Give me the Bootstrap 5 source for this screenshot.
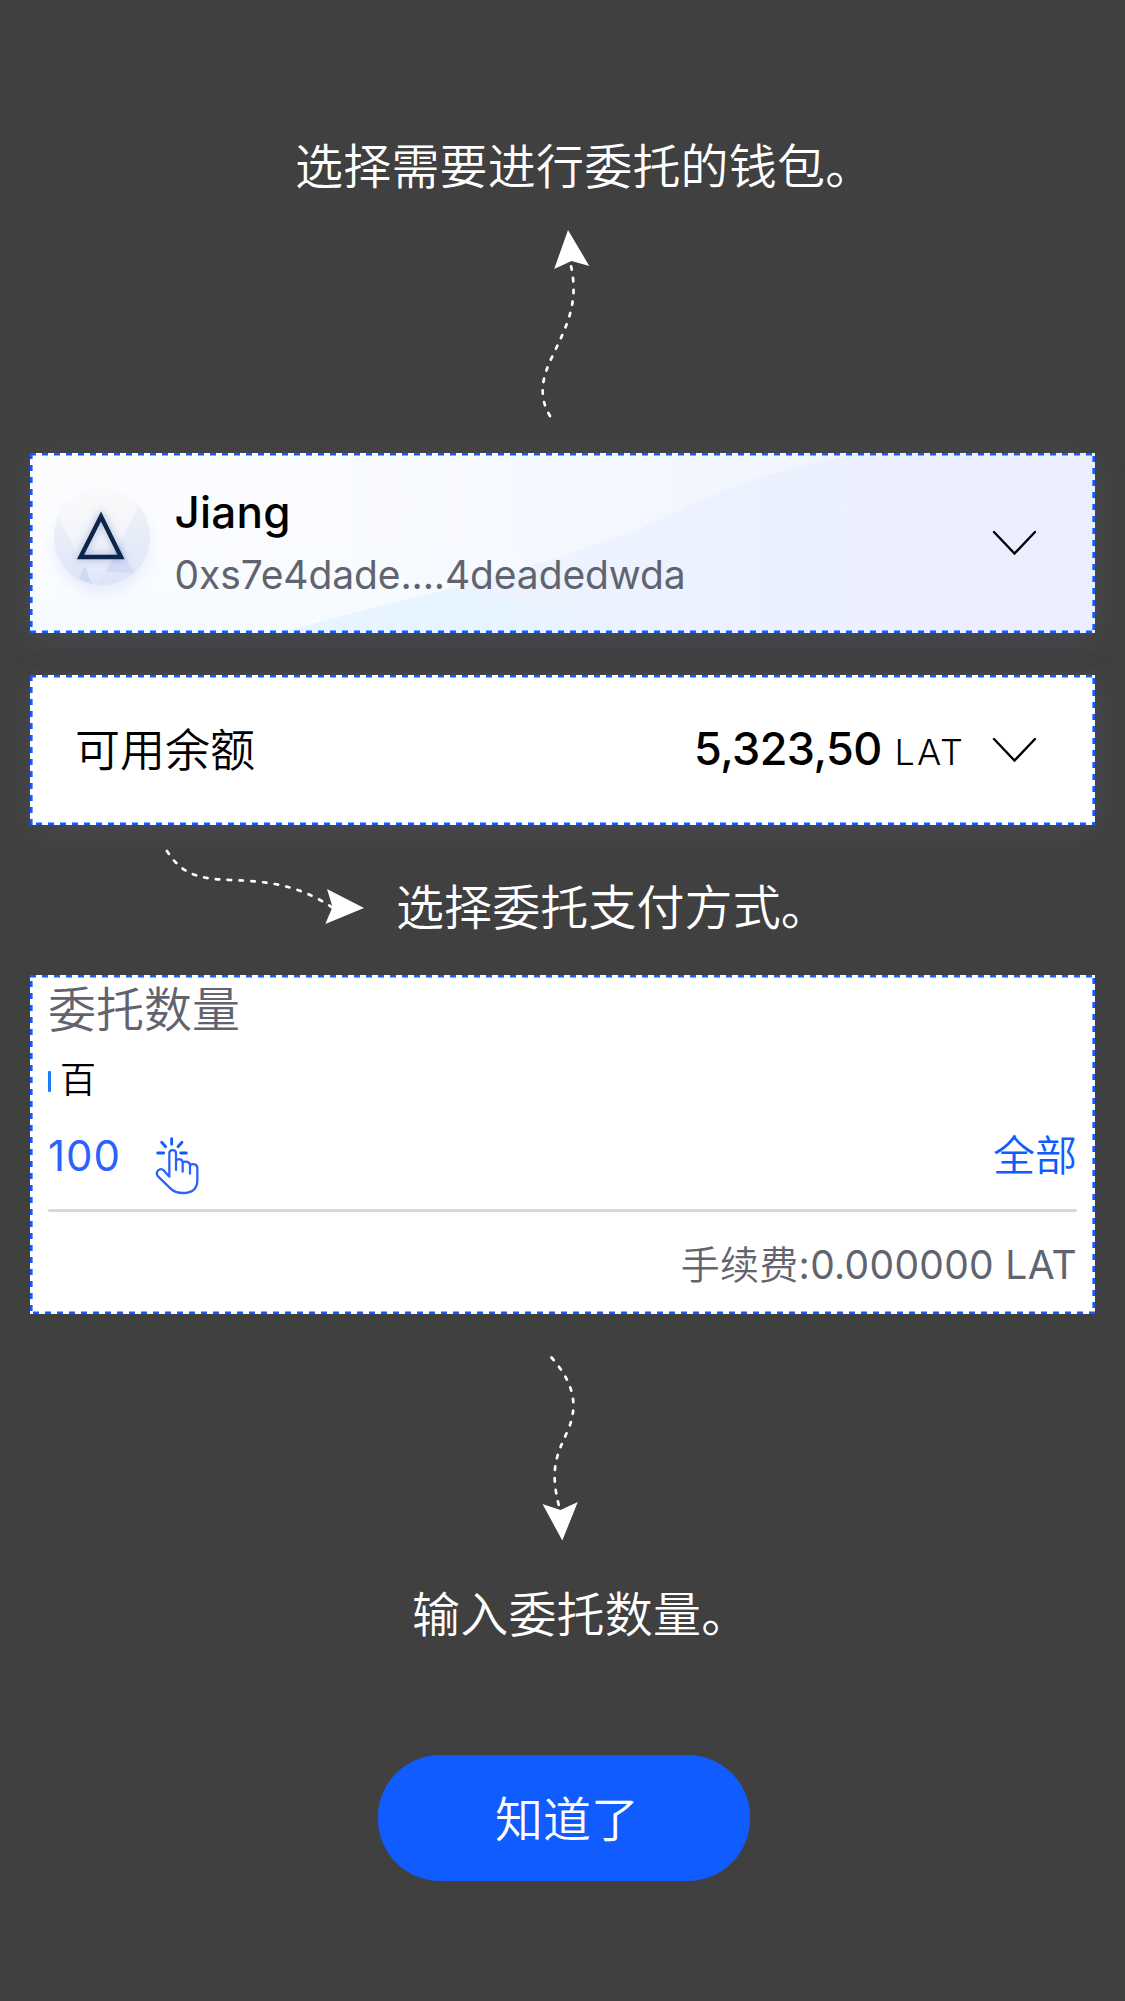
<!DOCTYPE html>
<html lang="zh-CN">
<head>
<meta charset="utf-8">
<meta name="viewport" content="width=device-width, initial-scale=1">
<title>委托引导</title>
<link href="https://cdn.jsdelivr.net/npm/bootstrap@5.3.0/dist/css/bootstrap.min.css" rel="stylesheet">
<style>
body{background:#404040;font-family:"Inter","Noto Sans CJK SC",sans-serif;color:#000;min-height:2001px}
.guide{width:1125px}
.zh{font-family:"Noto Sans CJK SC",sans-serif;font-weight:350}
.hint{font-size:48px;line-height:48px;color:#fff;white-space:nowrap}
.hint-wallet{padding:139px 0 0 295px;letter-spacing:.2px}
.hint-pay{margin-left:31px;padding-top:8px;letter-spacing:.1px}
.hint-amount{padding-left:412px;margin-top:42px;letter-spacing:.2px}
.arrow-up{margin:38px 0 0 535px}
.arrow-right{margin-left:155px}
.arrow-down{margin:36px 0 0 535px}
.arrow-line{fill:none;stroke:#fff;stroke-width:2.7;stroke-linecap:round;stroke-dasharray:3.4 8.4}
.panel{width:1065px;margin-left:30px;background:#fff}
.outline{left:0;top:0}
.outline path{fill:none;stroke:#105cfe;stroke-width:2.6;stroke-dasharray:6 6}
.glow{box-shadow:0 6px 28px rgba(98,104,125,.28)}
.wallet{height:180px;margin-top:28px}
.balance{height:150px;margin-top:42px}
.pay-row{height:150px}
.amount{height:339px;padding:0 18px}
.scenery{left:0;top:0}
.avatar{margin-left:12px}
.wallet-name{font-size:44px;line-height:54px;font-weight:500;letter-spacing:.2px}
.wallet-addr{font-size:39px;line-height:48px;color:#61646e;letter-spacing:-.1px;margin-top:12px}
.wallet-body{margin-left:4.5px;padding-top:32px}
.chev{margin-right:59px}
.label-balance{font-size:45px;line-height:60px;margin:-5px 0 0 45px}
.sum{font-size:45px;line-height:60px;font-weight:500;letter-spacing:-.6px}
.unit{font-size:36px;font-weight:300;line-height:60px;margin-left:13px;margin-right:27px;letter-spacing:2px}
.amt-title{font-size:48px;line-height:48px;color:#61646e;padding-top:7px}
.amt-word{height:50px;margin-top:26px}
.caret{width:3px;height:21px;background:#1a7bfb;border-radius:1px}
.amt-word span{font-size:36px;line-height:42px;margin:-8px 0 0 9px}
.amt-row{height:103px}
.hundred{font-size:42px;line-height:60px;color:#2b62ff;letter-spacing:1px;margin-top:-4px}
.hand{margin:16px 0 0 33px}
.all-link{font-size:42px;line-height:60px;color:#105cfe;margin-top:-9px}
.rule-line{height:3px;background:#d5d8df;border-radius:2px}
.fee{font-size:39px;line-height:54px;color:#61646e;margin-top:23px;letter-spacing:.3px}
.btn-ok{width:372px;height:126px;margin:120px 0 0 378px;padding:0 0 4px 6px;border-radius:62px;background:#105cfe;color:#fff;font-size:48px;line-height:48px;border:0}
.btn-ok:hover{background:#0d50e0;color:#fff}
</style>
</head>
<body>
<main class="guide d-flex flex-column align-items-start">
  <div class="hint zh hint-wallet">选择需要进行委托的钱包。</div>
  <svg class="arrow-up d-block" width="60" height="200" viewBox="535 225 60 200">
    <path class="arrow-line" d="M550 416C538 396 542 377 553 355C567 325 579 303 571 266"/>
    <path fill="#fff" d="M568 230L589.3 266L571.5 261L554.2 269Z"/>
  </svg>

  <section class="panel glow wallet position-relative d-flex align-items-start">
    <svg class="scenery position-absolute" width="1065" height="180" viewBox="0 0 1065 180">
      <defs>
        <linearGradient id="sky" x1="0" y1="0" x2="1" y2="0"><stop offset="0" stop-color="#fdfdff"/><stop offset=".3" stop-color="#f9fbff"/><stop offset=".75" stop-color="#f1f5ff"/><stop offset="1" stop-color="#eff2ff"/></linearGradient>
        <linearGradient id="mist" x1="0" y1="0" x2="0" y2="1"><stop offset=".5" stop-color="#f5fcff" stop-opacity="0"/><stop offset="1" stop-color="#f5fbff"/></linearGradient>
        <linearGradient id="hill" gradientUnits="userSpaceOnUse" x1="260" y1="0" x2="1065" y2="0"><stop offset="0" stop-color="#e9f5ff"/><stop offset=".35" stop-color="#edf3ff"/><stop offset=".58" stop-color="#ebf1ff"/><stop offset=".8" stop-color="#edefff"/><stop offset="1" stop-color="#ebeeff"/></linearGradient>
        <linearGradient id="lake" gradientUnits="userSpaceOnUse" x1="250" y1="0" x2="620" y2="0"><stop offset="0" stop-color="#e8f4ff"/><stop offset=".5" stop-color="#e6f5ff"/><stop offset="1" stop-color="#eaf2ff"/></linearGradient>
      </defs>
      <path fill="url(#sky)" d="M0 0H1065V180H0Z"/>
      <path fill="url(#mist)" d="M0 0H500V180H0Z"/>
      <path fill="url(#hill)" d="M250 180C330 157 417 138 494 115C560 94 605 78 637 64C690 36 745 15 835 0H1065V180Z"/>
      <path fill="url(#lake)" d="M250 180C310 163 365 150 415 138C480 142 545 160 625 180Z"/>
    </svg>
    <svg class="outline position-absolute" width="1065" height="180" viewBox="0 0 1065 180"><path d="M0 1.3H1065M1063.7 3V180M0 178.7H1065M1.3 0V180"/></svg>
    <svg class="avatar position-relative" width="128" height="160" viewBox="42 453 128 160">
      <defs>
        <clipPath id="disc"><circle cx="102" cy="537" r="48"/></clipPath>
        <linearGradient id="face" x1="0" y1="0" x2="0" y2="1"><stop offset="0" stop-color="#fbfafa"/><stop offset=".5" stop-color="#f3f5fa"/><stop offset="1" stop-color="#dde6fa"/></linearGradient>
        <linearGradient id="wedge" x1="0" y1="0" x2="0" y2="1"><stop offset="0" stop-color="#eef1f9"/><stop offset="1" stop-color="#dbe4f7"/></linearGradient>
        <filter id="soft" x="-40%" y="-40%" width="180%" height="180%"><feGaussianBlur stdDeviation="8"/></filter>
        <filter id="dim" x="-40%" y="-40%" width="180%" height="180%"><feGaussianBlur stdDeviation="4"/></filter>
      </defs>
      <circle cx="102" cy="545" r="46" fill="#c9d7f8" opacity=".5" filter="url(#soft)"/>
      <circle cx="102" cy="537" r="48" fill="url(#face)"/>
      <g clip-path="url(#disc)">
        <path fill="url(#wedge)" d="M48 515H58L95 590H48Z"/>
        <path fill="url(#wedge)" d="M139 505L95 590H150V505Z"/>
        <path fill="#cfdaf7" d="M85 566L93 588H74Z"/>
        <path fill="#d2dcf5" d="M106 572L120 546L134 573Z"/>
      </g>
      <path d="M101 516L81 557H121Z" fill="none" stroke="#5a6da8" stroke-width="5" opacity=".5" filter="url(#dim)"/>
      <path d="M101 516.500L80.500 557H121Z" fill="none" stroke="#0d2549" stroke-width="4.400"/>
    </svg>
    <div class="wallet-body position-relative flex-grow-1">
      <div class="wallet-name">Jiang</div>
      <div class="wallet-addr">0xs7e4dade....4deadedwda</div>
    </div>
    <svg class="chev position-relative align-self-center" width="44" height="26" viewBox="0 0 44 26"><path d="M2 2L22.500 23.500L43 2" fill="none" stroke="#000" stroke-width="2.400" stroke-linecap="round"/></svg>
  </section>

  <section class="panel glow balance position-relative d-flex align-items-center">
    <svg class="outline position-absolute" width="1065" height="150" viewBox="0 0 1065 150"><path d="M0 1.3H1065M1063.7 3V150M6 148.7H1065M1.3 0V150"/></svg>
    <div class="label-balance zh">可用余额</div>
    <div class="d-flex align-items-baseline ms-auto"><span class="sum">5,323,50</span><span class="unit">LAT</span></div>
    <svg class="chev" width="44" height="26" viewBox="0 0 44 26"><path d="M2 2L22.500 23.500L43 2" fill="none" stroke="#000" stroke-width="2.400" stroke-linecap="round"/></svg>
  </section>

  <div class="pay-row d-flex align-items-center">
    <svg class="arrow-right" width="210" height="110" viewBox="155 845 210 110">
      <path class="arrow-line" d="M167 851C181 873 196 879 230 880C270 881 301 886 333 908"/>
      <path fill="#fff" d="M364 908L327 889L332.500 907L325.300 924Z"/>
    </svg>
    <div class="hint zh hint-pay">选择委托支付方式。</div>
  </div>

  <section class="panel amount position-relative d-flex flex-column">
    <svg class="outline position-absolute" width="1065" height="339" viewBox="0 0 1065 339"><path d="M0 1.3H1065M1063.7 3V339M3 337.7H1065M1.3 6V339"/></svg>
    <div class="amt-title zh">委托数量</div>
    <div class="amt-word d-flex align-items-center"><i class="caret"></i><span class="zh">百</span></div>
    <div class="amt-row d-flex align-items-center">
      <span class="hundred">100</span>
      <svg class="hand" width="46" height="60" viewBox="462 558 138 180" fill="none" stroke="#2b62ff" stroke-width="6.800" stroke-linecap="round" stroke-linejoin="round">
        <path stroke="#105cfe" stroke-width="8.500" d="M515 566V583M485 577L497 590M546 577L534 590M473 609H491M542 609H559"/>
        <path d="M508 680V610C508 597 528 597 528 610V660M528 632C535 624 548 627 548 638V665M548 638C556 632 570 635 570 646V671M570 646C578 639 592 643 592 654V690C592 717 577 729 549 729C531 729 521 725 512 716L474 679C464 667 479 650 492 662L508 680"/>
      </svg>
      <span class="all-link zh ms-auto">全部</span>
    </div>
    <div class="rule-line"></div>
    <div class="fee text-end"><span class="zh">手续费</span>:0.000000 LAT</div>
  </section>

  <svg class="arrow-down d-block" width="60" height="195" viewBox="535 1350 60 195">
    <path class="arrow-line" d="M551.500 1357.500C571 1380 580 1402 568 1430C558 1453 549 1467 559 1506"/>
    <path fill="#fff" d="M562.300 1540.500L542.500 1504L560.500 1510L577.800 1502Z"/>
  </svg>
  <div class="hint zh hint-amount">输入委托数量。</div>
  <button type="button" class="btn btn-ok zh">知道了</button>
</main>
<script src="https://cdn.jsdelivr.net/npm/bootstrap@5.3.0/dist/js/bootstrap.bundle.min.js"></script>
</body>
</html>
